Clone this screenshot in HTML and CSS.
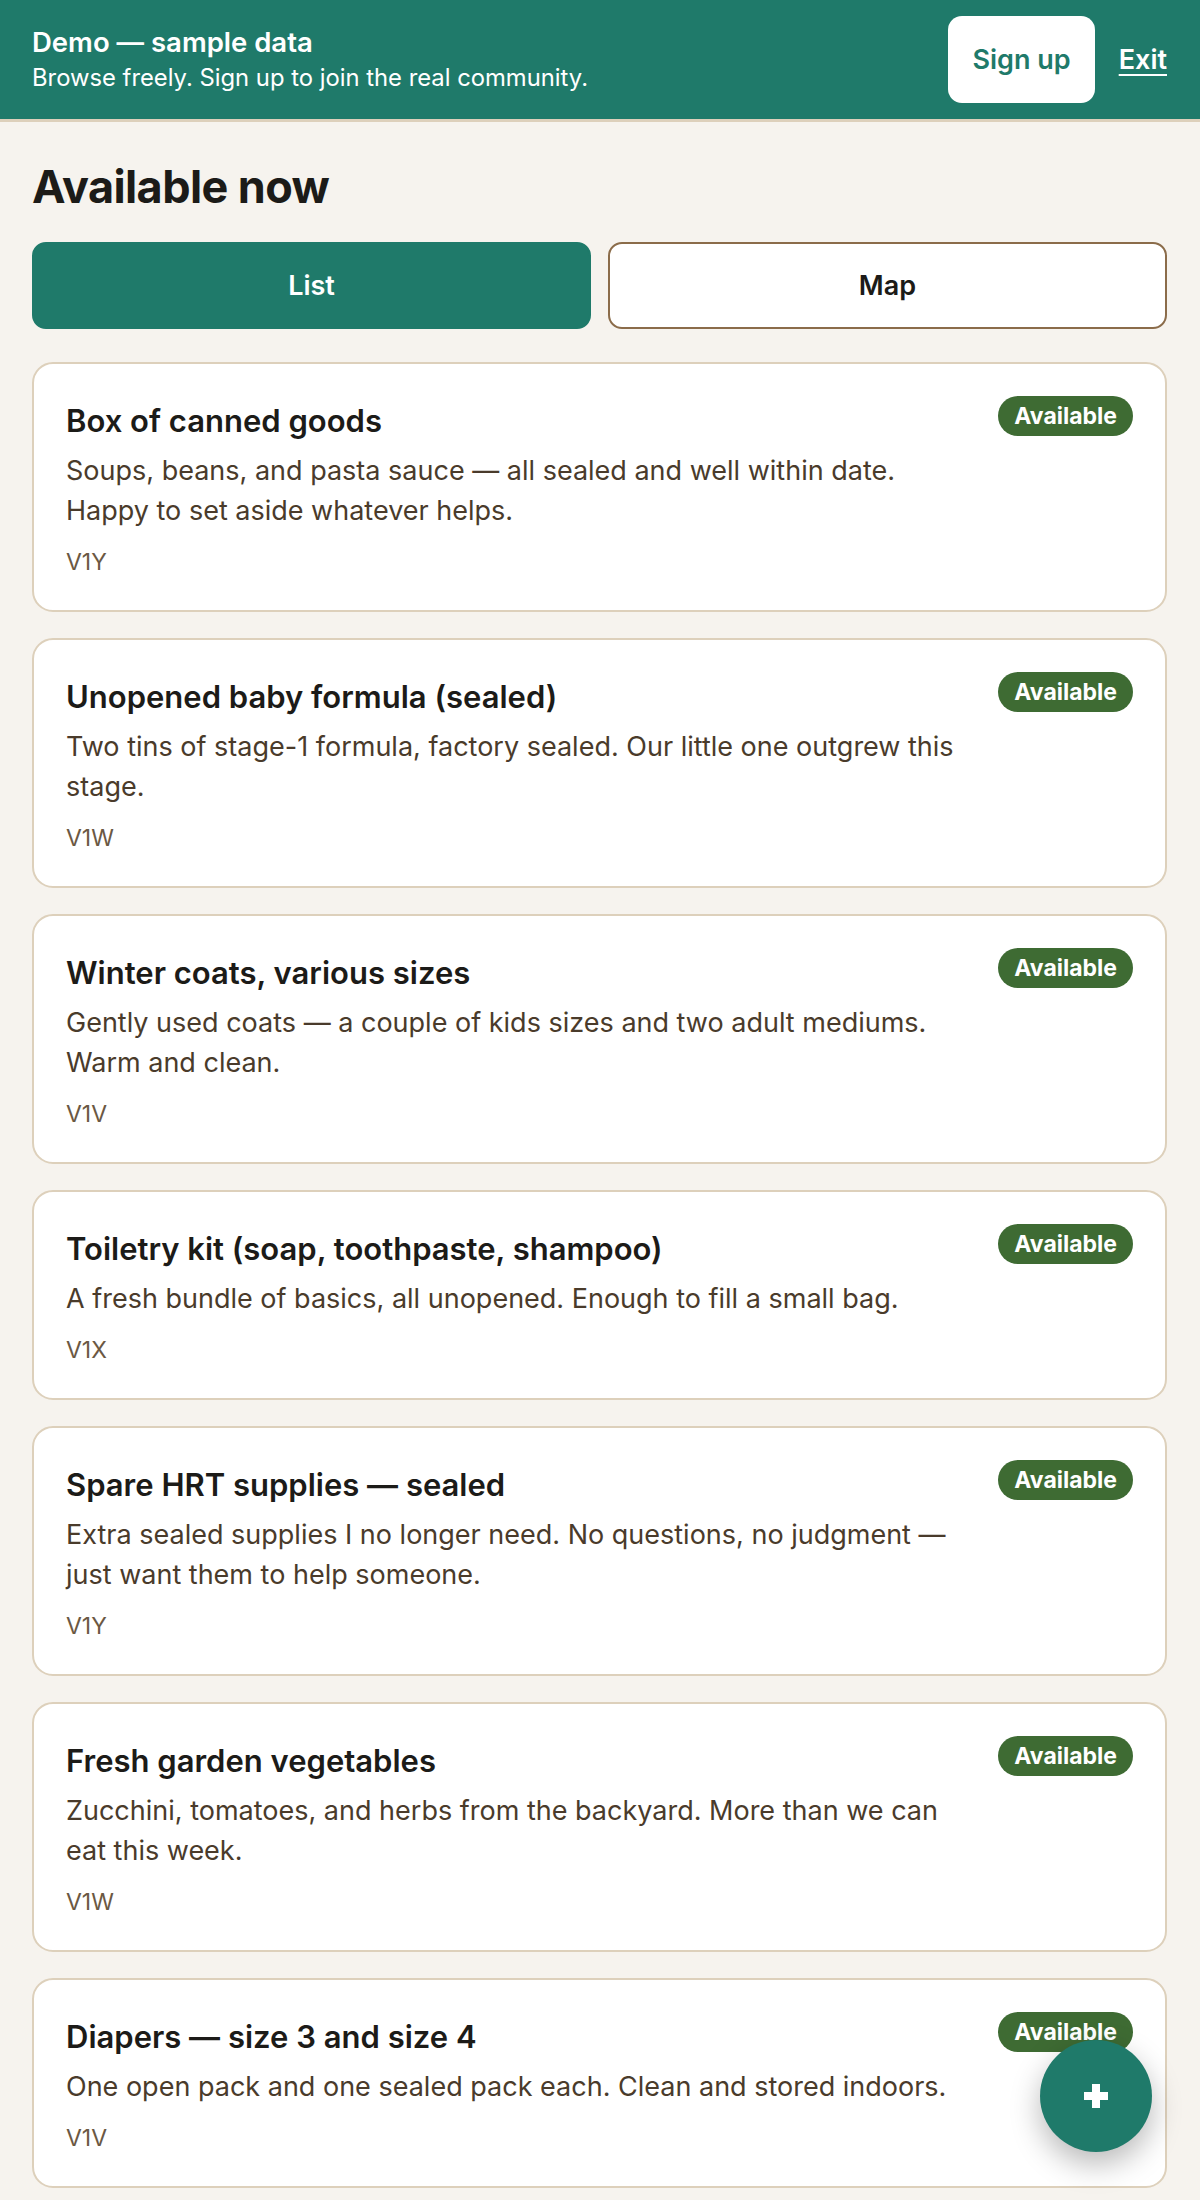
FILE: index.html
```html
<!DOCTYPE html>
<html lang="en">
<head>
<meta charset="utf-8">
<title>Available now</title>
<link rel="stylesheet" href="styles.css">
</head>
<body>
<header class="demo-bar">
  <div class="demo-text">
    <div class="demo-title">Demo — sample data</div>
    <div class="demo-sub">Browse freely. Sign up to join the real community.</div>
  </div>
  <div class="demo-actions">
    <a class="btn-signup" href="#">Sign up</a>
    <a class="link-exit" href="#">Exit</a>
  </div>
</header>
<main class="page">
  <h1 class="page-title">Available now</h1>
  <div class="view-toggle">
    <button class="toggle-btn toggle-active">List</button>
    <button class="toggle-btn">Map</button>
  </div>
  <ul class="listings">
    <li class="card">
      <div class="card-body">
        <h2 class="card-title">Box of canned goods</h2>
        <p class="card-desc">Soups, beans, and pasta sauce — all sealed and well within date. Happy to set aside whatever helps.</p>
        <div class="card-code">V1Y</div>
      </div>
      <span class="badge">Available</span>
    </li>
    <li class="card">
      <div class="card-body">
        <h2 class="card-title">Unopened baby formula (sealed)</h2>
        <p class="card-desc">Two tins of stage-1 formula, factory sealed. Our little one outgrew this stage.</p>
        <div class="card-code">V1W</div>
      </div>
      <span class="badge">Available</span>
    </li>
    <li class="card">
      <div class="card-body">
        <h2 class="card-title">Winter coats, various sizes</h2>
        <p class="card-desc">Gently used coats — a couple of kids sizes and two adult mediums. Warm and clean.</p>
        <div class="card-code">V1V</div>
      </div>
      <span class="badge">Available</span>
    </li>
    <li class="card">
      <div class="card-body">
        <h2 class="card-title">Toiletry kit (soap, toothpaste, shampoo)</h2>
        <p class="card-desc">A fresh bundle of basics, all unopened. Enough to fill a small bag.</p>
        <div class="card-code">V1X</div>
      </div>
      <span class="badge">Available</span>
    </li>
    <li class="card">
      <div class="card-body">
        <h2 class="card-title">Spare HRT supplies — sealed</h2>
        <p class="card-desc">Extra sealed supplies I no longer need. No questions, no judgment — just want them to help someone.</p>
        <div class="card-code">V1Y</div>
      </div>
      <span class="badge">Available</span>
    </li>
    <li class="card">
      <div class="card-body">
        <h2 class="card-title">Fresh garden vegetables</h2>
        <p class="card-desc">Zucchini, tomatoes, and herbs from the backyard. More than we can eat this week.</p>
        <div class="card-code">V1W</div>
      </div>
      <span class="badge">Available</span>
    </li>
    <li class="card">
      <div class="card-body">
        <h2 class="card-title">Diapers — size 3 and size 4</h2>
        <p class="card-desc">One open pack and one sealed pack each. Clean and stored indoors.</p>
        <div class="card-code">V1V</div>
      </div>
      <span class="badge">Available</span>
    </li>
  </ul>
</main>
<button class="fab" aria-label="Add listing">
  <svg width="26" height="26" viewBox="0 0 26 26"><path d="M13 1v24M1 13h24" stroke="#fff" stroke-width="8" fill="none"/></svg>
</button>
</body>
</html>
```
FILE: styles.css
```css
* { box-sizing: border-box; }
html, body { margin: 0; padding: 0; }
body {
  background: #f6f3ee;
  font-family: Inter, "Noto Sans", "Liberation Sans", sans-serif;
  color: #1c1b18;
}
.demo-bar {
  display: flex;
  align-items: center;
  justify-content: space-between;
  background: #1f7a6a;
  color: #fff;
  padding: 16px 33px 16px 32px;
  border-bottom: 3px solid #ddd0bb;
}
.demo-title {
  font-size: 27.5px;
  font-weight: 600;
  line-height: 37px;
}
.demo-sub {
  font-size: 23.8px;
  line-height: 34px;
}
.demo-actions {
  display: flex;
  align-items: center;
  gap: 24px;
}
.btn-signup {
  display: flex;
  align-items: center;
  height: 87px;
  padding: 0 24px;
  background: #fff;
  color: #1f7a6a;
  border-radius: 14px;
  font-size: 27px;
  font-weight: 600;
  text-decoration: none;
}
.link-exit {
  color: #fff;
  font-size: 27px;
  font-weight: 600;
  text-decoration: underline;
  text-underline-offset: 5px;
  text-decoration-thickness: 2px;
}
.page {
  padding: 0 33px 32px 32px;
}
.page-title {
  margin: 36px 0 26px;
  font-size: 45px;
  font-weight: 700;
  line-height: 58px;
  letter-spacing: -0.6px;
}
.view-toggle {
  display: grid;
  grid-template-columns: 1fr 1fr;
  gap: 17px;
  margin-bottom: 33px;
}
.toggle-btn {
  height: 87px;
  border: 2px solid #8b6c4a;
  border-radius: 14px;
  background: #fff;
  color: #1c1b18;
  font-family: inherit;
  font-size: 27px;
  font-weight: 600;
}
.toggle-active {
  background: #1f7a6a;
  border-color: #1f7a6a;
  color: #fff;
}
.listings {
  list-style: none;
  margin: 0;
  padding: 0;
  display: flex;
  flex-direction: column;
  gap: 26px;
}
.card {
  display: flex;
  align-items: flex-start;
  gap: 18px;
  background: #fff;
  border: 2px solid #ddd0bb;
  border-radius: 21px;
  padding: 32px;
}
.card-body {
  flex: 1;
  min-width: 0;
}
.card-title {
  margin: 0;
  padding-top: 5px;
  font-size: 31px;
  font-weight: 600;
  line-height: 40px;
  color: #1c1b18;
}
.card-desc {
  margin: 10px 0 0;
  font-size: 27px;
  line-height: 40px;
  color: #4a3b2b;
}
.card-code {
  margin-top: 16px;
  font-size: 23px;
  line-height: 31px;
  color: #6b5843;
}
.badge {
  flex-shrink: 0;
  height: 40px;
  padding: 0 16px;
  border-radius: 20px;
  background: #3e6b33;
  color: #fff;
  font-size: 23px;
  font-weight: 700;
  line-height: 40px;
}
.fab {
  position: fixed;
  right: 48px;
  bottom: 48px;
  width: 112px;
  height: 112px;
  border: none;
  border-radius: 50%;
  background: #1f7a6a;
  box-shadow: 0 12px 30px rgba(0, 0, 0, 0.28);
  display: flex;
  align-items: center;
  justify-content: center;
  padding: 0;
}
```
